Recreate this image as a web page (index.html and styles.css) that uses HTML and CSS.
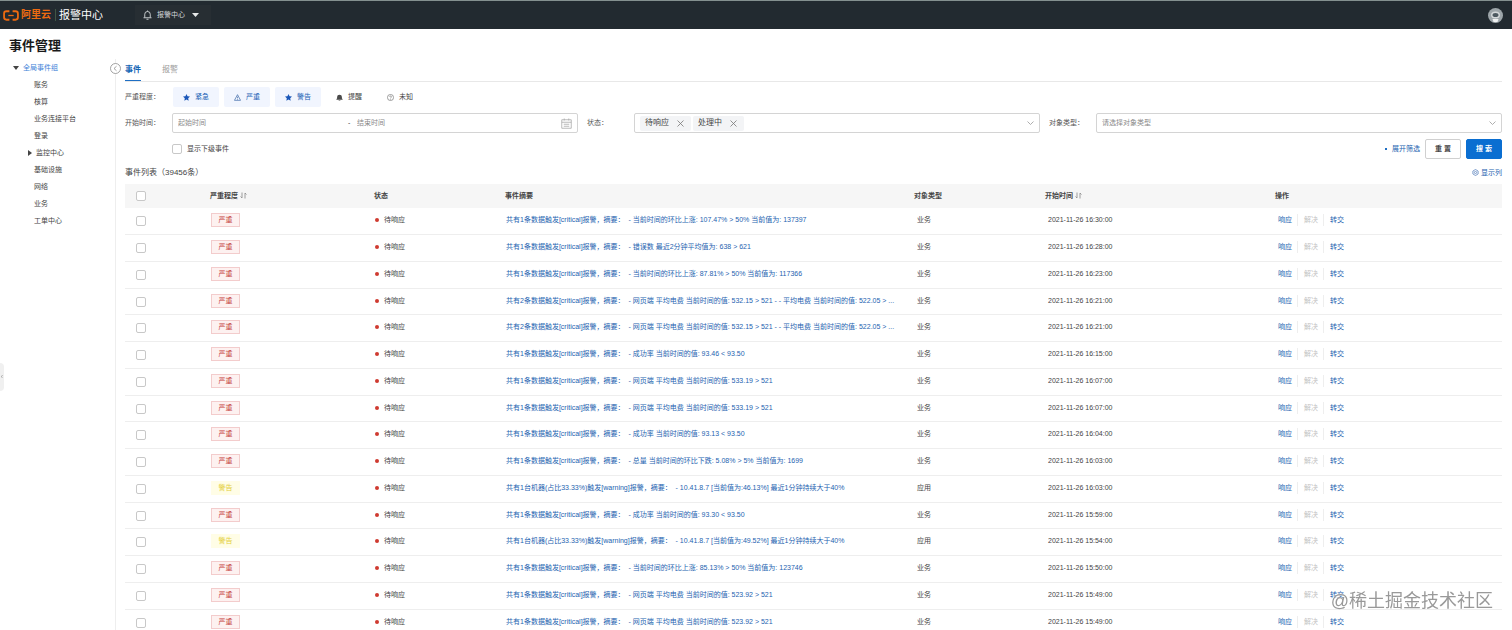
FILE: index.html
```html
<!DOCTYPE html>
<html lang="zh-CN">
<head>
    <meta charset="UTF-8">
    <title>报警中心 - 事件管理</title>
    <link rel="stylesheet" href="styles.css">
</head>
<body>
    <header class="topbar">
        <a href="#" class="logo">
            <svg class="logo-mark" viewBox="0 0 30 20" fill="none" stroke="#ee6a10" stroke-width="3.4">
                <path d="M12 2H6.5Q2 2 2 6.5V13.5Q2 18 6.5 18H12"/>
                <path d="M18 2H23.5Q28 2 28 6.5V13.5Q28 18 23.5 18H18"/>
                <path d="M10 10H20" stroke-width="2.4"/>
            </svg>
            <span class="logo-text">阿里云</span>
        </a>
        <span class="product">报警中心</span>
        <button type="button" class="nav-menu">
            <svg width="9" height="10" viewBox="0 0 18 20" fill="none" stroke="#d5d8da" stroke-width="1.8">
                <path d="M1 15.5H17M3.5 15V8.5a5.5 5.5 0 0 1 11 0V15M9 1V3M7 18.5h4"/>
            </svg>
            <span>报警中心</span>
            <svg width="7" height="4" viewBox="0 0 14 8" fill="#e6e8e9"><path d="M0 0H14L7 8Z"/></svg>
        </button>
        <button type="button" class="avatar" aria-label="用户">
            <svg width="15" height="15" viewBox="0 0 30 30">
                <circle cx="15" cy="15" r="15" fill="#9da5a9"/>
                <ellipse cx="15" cy="14" rx="9" ry="7" fill="#d4d8da"/>
                <ellipse cx="15" cy="14" rx="6" ry="4" fill="#4d5960"/>
                <path d="M9 22h12l-2 6h-8z" fill="#eef0f0"/>
            </svg>
        </button>
    </header>

    <h1>事件管理</h1>

    <div class="layout">
        <nav class="sidebar">
            <a href="#" class="group active"><i class="caret caret-down"></i>全局事件组</a>
            <a href="#">账务</a>
            <a href="#">核算</a>
            <a href="#">业务连接平台</a>
            <a href="#">登录</a>
            <a href="#" class="group nested"><i class="caret caret-right"></i>监控中心</a>
            <a href="#">基础设施</a>
            <a href="#">网络</a>
            <a href="#">业务</a>
            <a href="#">工单中心</a>
            <button type="button" class="collapse" aria-label="收起">
                <svg width="11" height="11" viewBox="0 0 22 22" fill="#fff" stroke="#8c8c8c" stroke-width="1.6">
                    <circle cx="11" cy="11" r="10"/>
                    <path d="M13 6.5L8 11l5 4.5"/>
                </svg>
            </button>
        </nav>

        <main class="content">
            <div class="tabs">
                <a href="#" class="tab active">事件</a>
                <a href="#" class="tab">报警</a>
            </div>

            <form>
                <div class="severity">
                    <span class="label">严重程度：</span>
                    <button type="button" class="chip on">
                        <svg viewBox="0 0 16 16" fill="#1a56b8"><path d="M8 0l2.4 5.2 5.6.7-4.1 3.9 1 5.7L8 12.7l-4.9 2.8 1-5.7L0 5.9l5.6-.7z"/></svg>紧急
                    </button>
                    <button type="button" class="chip on">
                        <svg viewBox="0 0 16 16" fill="none" stroke="#3f6aa8" stroke-width="1.6"><path d="M8 1.5L15 14.5H1ZM8 6v4M8 11.5v1.5"/></svg>严重
                    </button>
                    <button type="button" class="chip on">
                        <svg viewBox="0 0 16 16" fill="#1a56b8"><path d="M8 0l2.4 5.2 5.6.7-4.1 3.9 1 5.7L8 12.7l-4.9 2.8 1-5.7L0 5.9l5.6-.7z"/></svg>警告
                    </button>
                    <button type="button" class="chip">
                        <svg viewBox="0 0 16 16" fill="#4a4a4a"><path d="M1 13v-1.5l1.5-1V7a5.5 5.5 0 0 1 11 0v3.5l1.5 1V13zM6 14h4v1.5H6z"/></svg>提醒
                    </button>
                    <button type="button" class="chip">
                        <svg viewBox="0 0 16 16" fill="none" stroke="#666" stroke-width="1.4"><circle cx="8" cy="8" r="7"/><path d="M6 6.5a2 2 0 1 1 2.5 2L8 9v1M8 11.5V13"/></svg>未知
                    </button>
                </div>

                <div class="fields">
                    <div class="field">
                        <label class="label" for="start">开始时间：</label>
                        <div class="control">
                            <input type="text" id="start" placeholder="起始时间">
                            <span class="dash">-</span>
                            <input type="text" class="grow" aria-label="结束时间" placeholder="结束时间">
                            <svg width="11" height="11" viewBox="0 0 22 22" fill="none" stroke="#aaa" stroke-width="1.6">
                                <path d="M1.5 3.5h19v17h-19zM1.5 8.5h19M6.5 1v4M15.5 1v4M5.5 12.5h11M5.5 16.5h11"/>
                            </svg>
                        </div>
                    </div>
                    <div class="field">
                        <label class="label" for="status">状态：</label>
                        <div class="control tags">
                            <span class="pick">待响应<button type="button" aria-label="移除待响应"><svg width="7" height="7" viewBox="0 0 14 14" stroke="#777" stroke-width="1.6"><path d="M1 1L13 13M13 1L1 13"/></svg></button></span>
                            <span class="pick">处理中<button type="button" aria-label="移除处理中"><svg width="7" height="7" viewBox="0 0 14 14" stroke="#777" stroke-width="1.6"><path d="M1 1L13 13M13 1L1 13"/></svg></button></span>
                            <input type="text" id="status" class="grow" role="combobox">
                            <svg width="7" height="4" viewBox="0 0 14 8" fill="none" stroke="#999" stroke-width="1.6"><path d="M1 1l6 6 6-6"/></svg>
                        </div>
                    </div>
                    <div class="field">
                        <label class="label" for="type">对象类型：</label>
                        <div class="control">
                            <select id="type" class="grow">
                                <option>请选择对象类型</option>
                                <option>业务</option>
                                <option>应用</option>
                            </select>
                            <svg width="7" height="4" viewBox="0 0 14 8" fill="none" stroke="#999" stroke-width="1.6"><path d="M1 1l6 6 6-6"/></svg>
                        </div>
                    </div>
                </div>

                <div class="form-foot">
                    <label class="sub-events"><input type="checkbox">显示下级事件</label>
                    <a href="#" class="expand">展开筛选</a>
                    <button type="reset" class="btn">重 置</button>
                    <button type="submit" class="btn primary">搜 索</button>
                </div>
            </form>

            <div class="list-head">
                <h2>事件列表（39456条）</h2>
                <a href="#" class="columns">
                    <svg width="7" height="7" viewBox="0 0 14 14" fill="none" stroke="#4d78b8" stroke-width="1.4"><path d="M7 1l5.2 3v6L7 13 1.8 10V4z"/><circle cx="7" cy="7" r="2.2"/></svg>显示列
                </a>
            </div>

            <table>
                <colgroup>
                    <col class="col-check">
                    <col class="col-level">
                    <col class="col-status">
                    <col>
                    <col class="col-type">
                    <col class="col-time">
                    <col class="col-ops">
                </colgroup>
                <thead>
                    <tr>
                        <th><input type="checkbox" aria-label="全选"></th>
                        <th>严重程度<svg class="sort" viewBox="0 0 14 14" fill="none" stroke="#888" stroke-width="1.6"><path d="M4 1v11L1 9M10 13V2l3 3"/></svg></th>
                        <th>状态</th>
                        <th>事件摘要</th>
                        <th>对象类型</th>
                        <th>开始时间<svg class="sort" viewBox="0 0 14 14" fill="none" stroke="#888" stroke-width="1.6"><path d="M4 1v11L1 9M10 13V2l3 3"/></svg></th>
                        <th>操作</th>
                    </tr>
                </thead>
                <tbody id="events"></tbody>
            </table>
        </main>
    </div>

    <button type="button" class="drawer-handle" aria-label="展开菜单">‹</button>
    <div class="watermark">@稀土掘金技术社区</div>

    <script src="events.js"></script>
</body>
</html>
```
FILE: styles.css
```css
* {
    box-sizing: border-box;
}

body {
    display: flex;
    flex-direction: column;
    height: 100vh;
    margin: 0;
    overflow: hidden;
    background: #fff;
    color: #444;
    font-family: "Liberation Sans", "Noto Sans CJK SC", sans-serif;
    font-size: 7px;
    line-height: 12px;
}

button,
input,
select {
    margin: 0;
    padding: 0;
    border: none;
    background: none;
    color: inherit;
    font: inherit;
}

a {
    color: #2563b0;
    text-decoration: none;
}

svg {
    flex: none;
}

/* top bar */
.topbar {
    display: flex;
    flex: none;
    align-items: center;
    height: 29px;
    padding: 0 9px 0 3px;
    border-top: 1px solid #84908f;
    background: #222a30;
    color: #fff;
}

.logo {
    display: flex;
    align-items: center;
    gap: 2px;
    padding-right: 4px;
    border-right: 1px solid #3f5645;
    color: #ee6a10;
    font-size: 10px;
    font-weight: bold;
}

.logo-mark {
    width: 16px;
    height: 11px;
}

.product {
    padding-left: 3px;
    font-size: 11px;
}

.nav-menu {
    display: flex;
    align-items: center;
    gap: 5px;
    height: 20px;
    margin-left: 32px;
    padding: 0 12px 0 8px;
    background: #272e33;
    color: #d5d8da;
}

.nav-menu svg:last-child {
    margin-left: 2px;
}

.avatar {
    display: flex;
    margin-left: auto;
}

h1 {
    flex: none;
    margin: 7px 9px 3px;
    color: #1a1a1a;
    font-size: 13px;
    line-height: 20px;
}

/* layout */
.layout {
    display: flex;
    flex: 1;
    min-height: 0;
}

.sidebar {
    position: relative;
    display: flex;
    flex: none;
    flex-direction: column;
    width: 116px;
    border-right: 1px solid #eee;
    line-height: 17px;
}

.sidebar a {
    padding-left: 34px;
    color: #444;
}

.sidebar .group {
    display: flex;
    align-items: center;
    gap: 4px;
    padding-left: 13px;
}

.sidebar .nested {
    padding-left: 28px;
}

.sidebar .active {
    color: #3d82d8;
}

.caret {
    border: 3px solid transparent;
}

.caret-down {
    border-top: 4px solid #444;
    border-bottom: none;
}

.caret-right {
    border-left: 4px solid #444;
    border-right: none;
}

.collapse {
    position: absolute;
    top: 4px;
    right: -6px;
    display: flex;
}

.content {
    flex: 1;
    min-width: 0;
    padding: 2px 10px 0 9px;
}

.tabs {
    display: flex;
    gap: 21px;
    height: 21px;
    border-bottom: 1px solid #e8e8e8;
    font-size: 8px;
    line-height: 17px;
}

.tab {
    height: 20px;
    color: #999;
}

.tab.active {
    border-bottom: 1px solid #1f6fc4;
    color: #1464b4;
    font-weight: bold;
}

/* filters */
.label {
    flex: none;
    width: 47px;
    color: #555;
}

.severity {
    display: flex;
    align-items: center;
    gap: 5px;
    padding: 5px 0 6px;
}

.severity .label {
    width: 43px;
}

.chip {
    display: flex;
    align-items: center;
    justify-content: center;
    gap: 5px;
    width: 46px;
    height: 20px;
    border-radius: 2px;
}

.chip svg {
    width: 7px;
    height: 7px;
}

.chip.on {
    background: #f1f5fe;
    color: #1a62b5;
}

.fields {
    display: grid;
    grid-template-columns: repeat(3, 1fr);
    gap: 9px;
}

.field {
    display: flex;
    align-items: center;
}

.control {
    display: flex;
    flex: 1;
    align-items: center;
    height: 20px;
    padding: 0 5px;
    border: 1px solid #d4d4d4;
    border-radius: 2px;
}

.control input,
.control select {
    min-width: 0;
    outline: none;
}

.control input {
    width: 170px;
}

.control .grow {
    flex: 1;
    width: auto;
}

.control select {
    appearance: none;
    color: #8a8a8a;
}

.control input::placeholder {
    color: #8a8a8a;
}

.dash {
    width: 9px;
}

.pick {
    display: flex;
    align-items: center;
    gap: 8px;
    height: 15px;
    margin-right: 2px;
    padding: 0 5px;
    border-radius: 2px;
    background: #f3f4f6;
    font-size: 8px;
}

.pick button {
    display: flex;
    margin-right: 2px;
}

.form-foot {
    display: flex;
    align-items: center;
    gap: 5px;
    padding-top: 6px;
}

.sub-events {
    display: flex;
    align-items: center;
    gap: 5px;
    margin-left: 47px;
}

input[type="checkbox"] {
    display: block;
    appearance: none;
    width: 10px;
    height: 10px;
    border: 1px solid #c8c8c8;
    border-radius: 2px;
    background: #fff;
}

.expand {
    display: flex;
    align-items: center;
    gap: 5px;
    margin-left: auto;
}

.expand::before {
    content: "";
    width: 2px;
    height: 2px;
    background: #1f6fc4;
}

.btn {
    width: 36px;
    height: 20px;
    border: 1px solid #d0d0d0;
    border-radius: 2px;
    font-weight: bold;
}

.btn.primary {
    border-color: #0a6ed1;
    background: #0a6ed1;
    color: #fff;
}

/* event list */
.list-head {
    display: flex;
    align-items: center;
    justify-content: space-between;
    height: 25px;
    padding-top: 2px;
}

h2 {
    margin: 0;
    font-size: 8px;
    font-weight: normal;
}

.columns {
    display: flex;
    align-items: center;
    gap: 2px;
}

table {
    width: 100%;
    border-collapse: separate;
    border-spacing: 0;
    table-layout: fixed;
}

.col-check {
    width: 75px;
}

.col-level {
    width: 164px;
}

.col-status,
.col-type {
    width: 131px;
}

.col-time {
    width: 230px;
}

.col-ops {
    width: 237px;
}

th {
    height: 24px;
    padding: 0 0 0 10px;
    background: #f6f6f6;
    font-weight: bold;
    text-align: left;
}

td {
    height: 27px;
    padding: 0 0 2px 11px;
    border-bottom: 1px solid #eee;
    overflow: hidden;
    text-overflow: ellipsis;
    white-space: nowrap;
}

tr:nth-child(4n) td {
    height: 26px;
}

th:first-child {
    padding-left: 11px;
}

td:first-child {
    padding-bottom: 0;
}

td:nth-child(n+5) {
    padding-left: 13px;
}

.sort {
    width: 7px;
    height: 7px;
    margin-left: 2px;
    vertical-align: -1px;
}

.tag {
    display: inline-block;
    width: 29px;
    border: 1px solid #f3cccc;
    background: #fdf1f0;
    color: #c4403c;
    line-height: 12px;
    text-align: center;
}

.tag.warning {
    border-color: #fffde6;
    background: #fffde6;
    color: #e3cf3c;
}

.status {
    display: flex;
    align-items: center;
    gap: 5px;
}

.status::before {
    content: "";
    width: 4px;
    height: 4px;
    border-radius: 50%;
    background: #cf3a30;
}

.ops {
    display: flex;
    align-items: center;
    gap: 5px;
}

.ops a + a {
    padding-left: 6px;
    border-left: 1px solid #eee;
}

.ops .disabled {
    color: #c4c4c4;
}

.drawer-handle {
    position: fixed;
    top: 363px;
    left: 0;
    width: 4px;
    height: 28px;
    border-radius: 0 4px 4px 0;
    background: #f0f0f0;
    color: #999;
}

.watermark {
    position: fixed;
    right: 19px;
    bottom: 17px;
    color: #999;
    font-size: 18px;
    line-height: 24px;
    text-shadow: 0 0 1px #fff;
}
```
FILE: events.js
```js
const critical = '共有1条数据触发[critical]报警，摘要： &nbsp;- ';
const critical2 = '共有2条数据触发[critical]报警，摘要： &nbsp;- ';
const warning = '共有1台机器(占比33.33%)触发[warning]报警，摘要： &nbsp;- ';

const events = [
    ['严重', critical + '当前时间的环比上涨: 107.47% > 50% 当前值为: 137397', '业务', '16:30:00'],
    ['严重', critical + '错误数 最近2分钟平均值为: 638 > 621', '业务', '16:28:00'],
    ['严重', critical + '当前时间的环比上涨: 87.81% > 50% 当前值为: 117366', '业务', '16:23:00'],
    ['严重', critical2 + '网页端 平均电费 当前时间的值: 532.15 > 521 - - 平均电费 当前时间的值: 522.05 > ...', '业务', '16:21:00'],
    ['严重', critical2 + '网页端 平均电费 当前时间的值: 532.15 > 521 - - 平均电费 当前时间的值: 522.05 > ...', '业务', '16:21:00'],
    ['严重', critical + '成功率 当前时间的值: 93.46 < 93.50', '业务', '16:15:00'],
    ['严重', critical + '网页端 平均电费 当前时间的值: 533.19 > 521', '业务', '16:07:00'],
    ['严重', critical + '网页端 平均电费 当前时间的值: 533.19 > 521', '业务', '16:07:00'],
    ['严重', critical + '成功率 当前时间的值: 93.13 < 93.50', '业务', '16:04:00'],
    ['严重', critical + '总量 当前时间的环比下跌: 5.08% > 5% 当前值为: 1699', '业务', '16:03:00'],
    ['警告', warning + '10.41.8.7 [当前值为:46.13%] 最近1分钟持续大于40%', '应用', '16:03:00'],
    ['严重', critical + '成功率 当前时间的值: 93.30 < 93.50', '业务', '15:59:00'],
    ['警告', warning + '10.41.8.7 [当前值为:49.52%] 最近1分钟持续大于40%', '应用', '15:54:00'],
    ['严重', critical + '当前时间的环比上涨: 85.13% > 50% 当前值为: 123746', '业务', '15:50:00'],
    ['严重', critical + '网页端 平均电费 当前时间的值: 523.92 > 521', '业务', '15:49:00'],
    ['严重', critical + '网页端 平均电费 当前时间的值: 523.92 > 521', '业务', '15:49:00']
];

document.getElementById('events').innerHTML = events.map(([level, summary, type, time]) => `
    <tr>
        <td><input type="checkbox" aria-label="选择"></td>
        <td><span class="tag ${level === '警告' ? 'warning' : ''}">${level}</span></td>
        <td><span class="status">待响应</span></td>
        <td><a href="#">${summary}</a></td>
        <td>${type}</td>
        <td>2021-11-26 ${time}</td>
        <td><div class="ops"><a href="#">响应</a><a href="#" class="disabled">解决</a><a href="#">转交</a></div></td>
    </tr>
`).join('');
```
